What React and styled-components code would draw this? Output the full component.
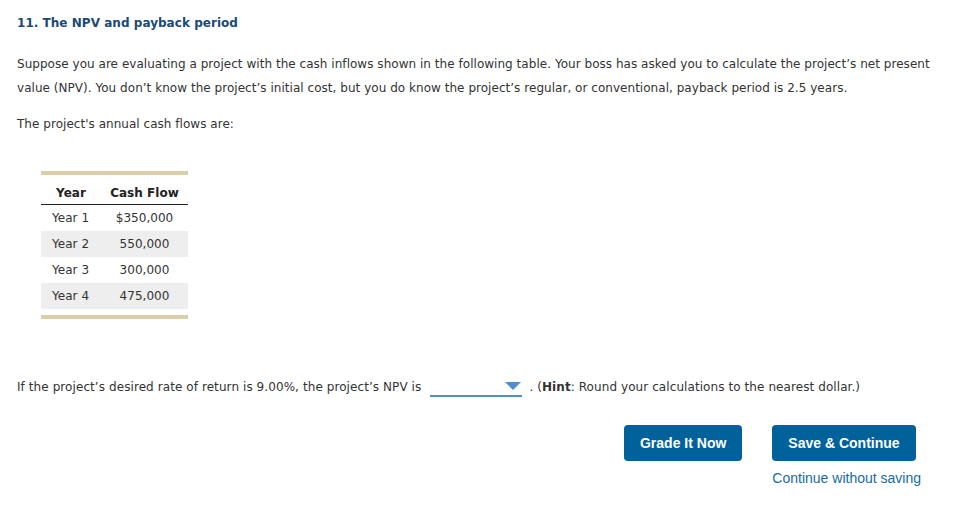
import React from "react";
import styled, { createGlobalStyle } from "styled-components";

const Global = createGlobalStyle`
  html, body { margin: 0; padding: 0; background: #fff; }
  body { font-family: "DejaVu Sans", Verdana, sans-serif; color: #333; }
`;

const Page = styled.div`
  padding: 15px 17px 0 17px;
  font-size: 12px;
  letter-spacing: 0.035px;
`;

const Title = styled.h2`
  margin: 0;
  font-size: 12px;
  font-weight: bold;
  color: #1b4a74;
  line-height: 16px;
`;

const Para = styled.p`
  margin: ${(p) => p.$mt || 0}px 0 0 0;
  line-height: 24px;
  font-size: 12px;
  color: #333;
`;

const TableWrap = styled.div`
  margin: 35px 0 0 24px;
  width: 147px;
  border-top: 4px solid #d9cea6;
  border-bottom: 4px solid #d9cea6;
  padding-bottom: 6px;
`;

const Table = styled.table`
  width: 100%;
  border-collapse: collapse;
  font-size: 12px;
`;

const Th = styled.th`
  font-weight: bold;
  color: #222;
  height: 25px;
  padding: 0;
  text-align: center;
  vertical-align: bottom;
  padding-bottom: 4px;
  border-bottom: 1px solid #222;
`;

const Row = styled.tr`
  background: ${(p) => (p.$alt ? "#eeeeee" : "transparent")};
`;

const Td = styled.td`
  height: 26px;
  padding: 0 0 0 ${(p) => (p.$left ? 11 : 0)}px;
  text-align: ${(p) => (p.$left ? "left" : "center")};
  color: #333;
`;

const Question = styled.div`
  margin-top: 56px;
  display: flex;
  align-items: center;
  line-height: 24px;
  font-size: 12px;
  letter-spacing: 0.08px;
`;

const Select = styled.div`
  width: 92px;
  height: 20px;
  margin: 0 7px 0 9px;
  border-bottom: 2px solid #4f8fca;
  position: relative;
  top: -1px;
`;

const Caret = styled.svg`
  position: absolute;
  right: 1px;
  top: 7px;
`;

const Actions = styled.div`
  margin-top: 26px;
  display: flex;
  justify-content: flex-end;
  align-items: flex-start;
  gap: 30px;
  padding-right: 15px;
`;

const Col = styled.div`
  display: flex;
  flex-direction: column;
  align-items: flex-start;
`;

const Button = styled.button`
  height: 36px;
  padding: 0 ${(p) => p.$px}px;
  background: #00619b;
  color: #fff;
  border: none;
  border-radius: 4px;
  font-family: "Liberation Sans", Arial, sans-serif;
  font-weight: bold;
  font-size: 14px;
  letter-spacing: 0;
  cursor: pointer;
`;

const Link = styled.a`
  margin-top: 9px;
  font-family: "Liberation Sans", Arial, sans-serif;
  font-size: 14px;
  letter-spacing: 0;
  color: #1a6aa2;
  text-decoration: none;
`;

const rows = [
  ["Year 1", "$350,000"],
  ["Year 2", "550,000"],
  ["Year 3", "300,000"],
  ["Year 4", "475,000"],
];

export default function App() {
  return (
    <>
      <Global />
      <Page>
        <Title>11. The NPV and payback period</Title>
        <Para $mt={21}>
          Suppose you are evaluating a project with the cash inflows shown in the following table. Your boss has asked you to calculate the project’s net present value (NPV). You don’t know the project’s initial cost, but you do know the project’s regular, or conventional, payback period is 2.5 years.
        </Para>
        <Para $mt={12}>The project's annual cash flows are:</Para>
        <TableWrap>
          <Table>
            <thead>
              <tr>
                <Th style={{ width: 60 }}>Year</Th>
                <Th>Cash Flow</Th>
              </tr>
            </thead>
            <tbody>
              {rows.map((r, i) => (
                <Row key={r[0]} $alt={i % 2 === 1}>
                  <Td $left>{r[0]}</Td>
                  <Td>{r[1]}</Td>
                </Row>
              ))}
            </tbody>
          </Table>
        </TableWrap>
        <Question>
          <span>If the project’s desired rate of return is 9.00%, the project’s NPV is</span>
          <Select>
            <Caret width="16" height="8" viewBox="0 0 16 8">
              <path d="M0 0 L16 0 L8 8 Z" fill="#4f8fca" />
            </Caret>
          </Select>
          <span>
            . (<b>Hint</b>: Round your calculations to the nearest dollar.)
          </span>
        </Question>
        <Actions>
          <Button $px={16}>Grade It Now</Button>
          <Col>
            <Button $px={16}>Save &amp; Continue</Button>
            <Link href="#">Continue without saving</Link>
          </Col>
        </Actions>
      </Page>
    </>
  );
}
